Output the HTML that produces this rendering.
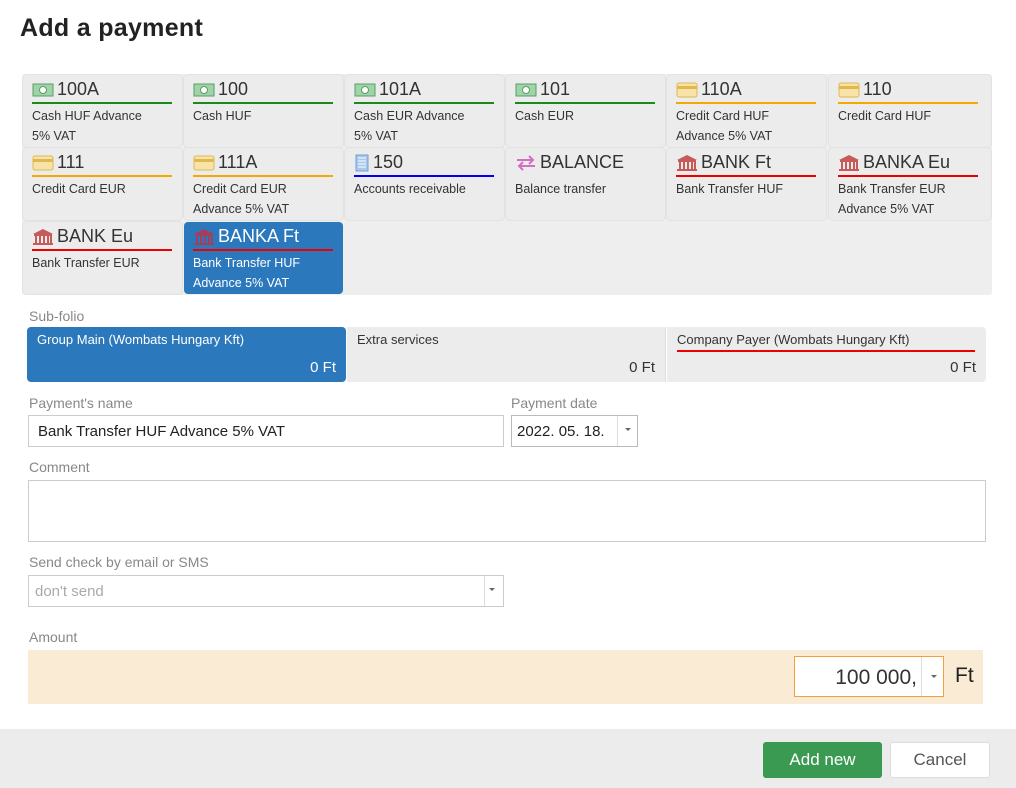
<!DOCTYPE html>
<html><head><meta charset="utf-8"><style>
*{box-sizing:border-box;margin:0;padding:0}
body{width:1016px;height:788px;background:#fff;font-family:"Liberation Sans",sans-serif;color:#333;position:relative;overflow:hidden}
.abs{position:absolute}
h1{position:absolute;left:20px;top:14px;font-size:25px;font-weight:bold;color:#222;letter-spacing:0.3px}
.grid{position:absolute;left:22px;top:74px;width:970px;height:221px;background:#eeeeee;border-radius:3px}
.t{position:absolute;width:159px;height:72px;background:#ececec;border-radius:4px;box-shadow:0 0 0 1px #e2e2e2}
.t .h{position:absolute;left:9px;top:4px;font-size:18px;color:#333;white-space:nowrap;display:flex;align-items:center}
.t .h svg{margin-right:3px}
.t .u{position:absolute;left:9px;top:27px;width:140px;height:2px}
.t .d{position:absolute;left:9px;top:31px;font-size:12.5px;line-height:20px;color:#333;width:128px}
.t.sel{background:#2c78bc;box-shadow:none}
.t.sel .h,.t.sel .d{color:#fff}
.lbl{position:absolute;font-size:14px;color:#888}
.inp{position:absolute;border:1px solid #ccc;background:#fff}
.sf{position:absolute;top:327px;height:55px;background:#ececec;font-size:13px}
</style></head><body>
<h1>Add a payment</h1>
<div class="grid"></div>
<!-- row1 -->
<div class="t" style="left:23px;top:75px"><div class="h"><svg width="22" height="14"><rect x="1" y="1" width="20" height="12" fill="#9fd4a8" stroke="#5a9e66"/><circle cx="11" cy="7" r="3.5" fill="#fff" stroke="#5a9e66"/></svg>100A</div><div class="u" style="background:#1a8a1a"></div><div class="d">Cash HUF Advance 5% VAT</div></div>
<div class="t" style="left:184px;top:75px"><div class="h"><svg width="22" height="14"><rect x="1" y="1" width="20" height="12" fill="#9fd4a8" stroke="#5a9e66"/><circle cx="11" cy="7" r="3.5" fill="#fff" stroke="#5a9e66"/></svg>100</div><div class="u" style="background:#1a8a1a"></div><div class="d">Cash HUF</div></div>
<div class="t" style="left:345px;top:75px"><div class="h"><svg width="22" height="14"><rect x="1" y="1" width="20" height="12" fill="#9fd4a8" stroke="#5a9e66"/><circle cx="11" cy="7" r="3.5" fill="#fff" stroke="#5a9e66"/></svg>101A</div><div class="u" style="background:#1a8a1a"></div><div class="d">Cash EUR Advance 5% VAT</div></div>
<div class="t" style="left:506px;top:75px"><div class="h"><svg width="22" height="14"><rect x="1" y="1" width="20" height="12" fill="#9fd4a8" stroke="#5a9e66"/><circle cx="11" cy="7" r="3.5" fill="#fff" stroke="#5a9e66"/></svg>101</div><div class="u" style="background:#1a8a1a"></div><div class="d">Cash EUR</div></div>
<div class="t" style="left:667px;top:75px"><div class="h"><svg width="22" height="16"><rect x="1" y="1" width="20" height="14" rx="2" fill="#f7e3a8" stroke="#e0b850"/><rect x="1" y="4" width="20" height="3" fill="#e0b850"/></svg>110A</div><div class="u" style="background:#f5a800"></div><div class="d">Credit Card HUF Advance 5% VAT</div></div>
<div class="t" style="left:829px;top:75px;width:162px"><div class="h"><svg width="22" height="16"><rect x="1" y="1" width="20" height="14" rx="2" fill="#f7e3a8" stroke="#e0b850"/><rect x="1" y="4" width="20" height="3" fill="#e0b850"/></svg>110</div><div class="u" style="background:#f5a800"></div><div class="d">Credit Card HUF</div></div>
<!-- row2 -->
<div class="t" style="left:23px;top:148px"><div class="h"><svg width="22" height="16"><rect x="1" y="1" width="20" height="14" rx="2" fill="#f7e3a8" stroke="#e0b850"/><rect x="1" y="4" width="20" height="3" fill="#e0b850"/></svg>111</div><div class="u" style="background:#f5a800"></div><div class="d">Credit Card EUR</div></div>
<div class="t" style="left:184px;top:148px"><div class="h"><svg width="22" height="16"><rect x="1" y="1" width="20" height="14" rx="2" fill="#f7e3a8" stroke="#e0b850"/><rect x="1" y="4" width="20" height="3" fill="#e0b850"/></svg>111A</div><div class="u" style="background:#f5a800"></div><div class="d">Credit Card EUR Advance 5% VAT</div></div>
<div class="t" style="left:345px;top:148px"><div class="h"><svg width="16" height="18"><rect x="2" y="1" width="12" height="16" fill="#a8c8ec" stroke="#6f9fd6"/><path d="M4 4h8M4 7h8M4 10h8M4 13h8" stroke="#fff"/></svg>150</div><div class="u" style="background:#0000ee"></div><div class="d">Accounts receivable</div></div>
<div class="t" style="left:506px;top:148px"><div class="h"><svg width="22" height="16"><path d="M2 5h16M14 1l4 4-4 4M20 11H4M8 7l-4 4 4 4" stroke="#d070c0" stroke-width="2" fill="none"/></svg>BALANCE</div><div class="d">Balance transfer</div></div>
<div class="t" style="left:667px;top:148px"><div class="h"><svg width="22" height="18"><path d="M11 1L1 6h20z" fill="#c85a5a"/><rect x="2" y="6" width="18" height="2" fill="#c85a5a"/><path d="M4 8v7M8 8v7M12 8v7M16 8v7M19 8v7" stroke="#c85a5a" stroke-width="2"/><rect x="1" y="15" width="20" height="2" fill="#c85a5a"/></svg>BANK Ft</div><div class="u" style="background:#ee0000"></div><div class="d">Bank Transfer HUF</div></div>
<div class="t" style="left:829px;top:148px;width:162px"><div class="h"><svg width="22" height="18"><path d="M11 1L1 6h20z" fill="#c85a5a"/><rect x="2" y="6" width="18" height="2" fill="#c85a5a"/><path d="M4 8v7M8 8v7M12 8v7M16 8v7M19 8v7" stroke="#c85a5a" stroke-width="2"/><rect x="1" y="15" width="20" height="2" fill="#c85a5a"/></svg>BANKA Eu</div><div class="u" style="background:#ee0000"></div><div class="d">Bank Transfer EUR Advance 5% VAT</div></div>
<!-- row3 -->
<div class="t" style="left:23px;top:222px"><div class="h"><svg width="22" height="18"><path d="M11 1L1 6h20z" fill="#c85a5a"/><rect x="2" y="6" width="18" height="2" fill="#c85a5a"/><path d="M4 8v7M8 8v7M12 8v7M16 8v7M19 8v7" stroke="#c85a5a" stroke-width="2"/><rect x="1" y="15" width="20" height="2" fill="#c85a5a"/></svg>BANK Eu</div><div class="u" style="background:#ee0000"></div><div class="d">Bank Transfer EUR</div></div>
<div class="t sel" style="left:184px;top:222px"><div class="h"><svg width="22" height="18"><path d="M11 1L1 6h20z" fill="#a04060"/><rect x="2" y="6" width="18" height="2" fill="#a04060"/><path d="M4 8v7M8 8v7M12 8v7M16 8v7M19 8v7" stroke="#a04060" stroke-width="2"/><rect x="1" y="15" width="20" height="2" fill="#a04060"/></svg>BANKA Ft</div><div class="u" style="background:#ee0000"></div><div class="d">Bank Transfer HUF Advance 5% VAT</div></div>

<div class="lbl" style="left:29px;top:308px">Sub-folio</div>
<div class="sf" style="left:27px;width:319px;background:#2c78bc;color:#fff;border-radius:4px"><div class="abs" style="left:10px;top:5px">Group Main (Wombats Hungary Kft)</div><div class="abs" style="right:10px;top:32px;font-size:15px">0 Ft</div></div>
<div class="sf" style="left:347px;width:319px;border-right:1px solid #ddd"><div class="abs" style="left:10px;top:5px">Extra services</div><div class="abs" style="right:10px;top:32px;font-size:15px">0 Ft</div></div>
<div class="sf" style="left:667px;width:319px;border-radius:0 4px 4px 0"><div class="abs" style="left:10px;top:5px">Company Payer (Wombats Hungary Kft)</div><div class="abs" style="left:10px;top:23px;width:298px;height:2px;background:#ee0000"></div><div class="abs" style="right:10px;top:32px;font-size:15px">0 Ft</div></div>

<div class="lbl" style="left:29px;top:395px">Payment's name</div>
<div class="inp" style="left:28px;top:415px;width:476px;height:32px;font-size:15px;padding:7px 9px;color:#222">Bank Transfer HUF Advance 5% VAT</div>
<div class="lbl" style="left:511px;top:395px">Payment date</div>
<div class="inp" style="left:511px;top:415px;width:127px;height:32px;font-size:15px;padding:7px 5px;color:#222;border-color:#bbb">2022. 05. 18.<div class="abs" style="left:105px;top:0;width:1px;height:30px;background:#ddd"></div><div class="abs" style="left:113px;top:12px;border:3px solid transparent;border-top:3px solid #666"></div></div>

<div class="lbl" style="left:29px;top:459px">Comment</div>
<div class="inp" style="left:28px;top:480px;width:958px;height:62px"></div>

<div class="lbl" style="left:29px;top:554px">Send check by email or SMS</div>
<div class="inp" style="left:28px;top:575px;width:476px;height:32px;font-size:15px;padding:7px 6px;color:#aaa">don't send<div class="abs" style="left:455px;top:0;width:1px;height:30px;background:#ddd"></div><div class="abs" style="left:460px;top:12px;border:3px solid transparent;border-top:3px solid #666"></div></div>

<div class="lbl" style="left:29px;top:629px">Amount</div>
<div class="abs" style="left:28px;top:650px;width:955px;height:54px;background:#faebd4"></div>
<div class="inp" style="left:794px;top:656px;width:150px;height:41px;border-color:#f5a040;font-size:21px;color:#333"><div class="abs" style="right:26px;top:9px">100 000,</div><div class="abs" style="left:126px;top:0;width:1px;height:39px;background:#ddd"></div><div class="abs" style="left:136px;top:18px;border:3px solid transparent;border-top:3px solid #666"></div></div>
<div class="abs" style="left:955px;top:664px;font-size:21px;color:#222">Ft</div>

<div class="abs" style="left:0;top:729px;width:1016px;height:59px;background:#ececec"></div>
<div class="abs" style="left:763px;top:742px;width:119px;height:36px;background:#3a9a52;border-radius:3px;color:#fff;font-size:17px;text-align:center;line-height:36px">Add new</div>
<div class="abs" style="left:890px;top:742px;width:100px;height:36px;background:#fff;border:1px solid #ddd;border-radius:3px;color:#555;font-size:17px;text-align:center;line-height:34px">Cancel</div>
</body></html>
